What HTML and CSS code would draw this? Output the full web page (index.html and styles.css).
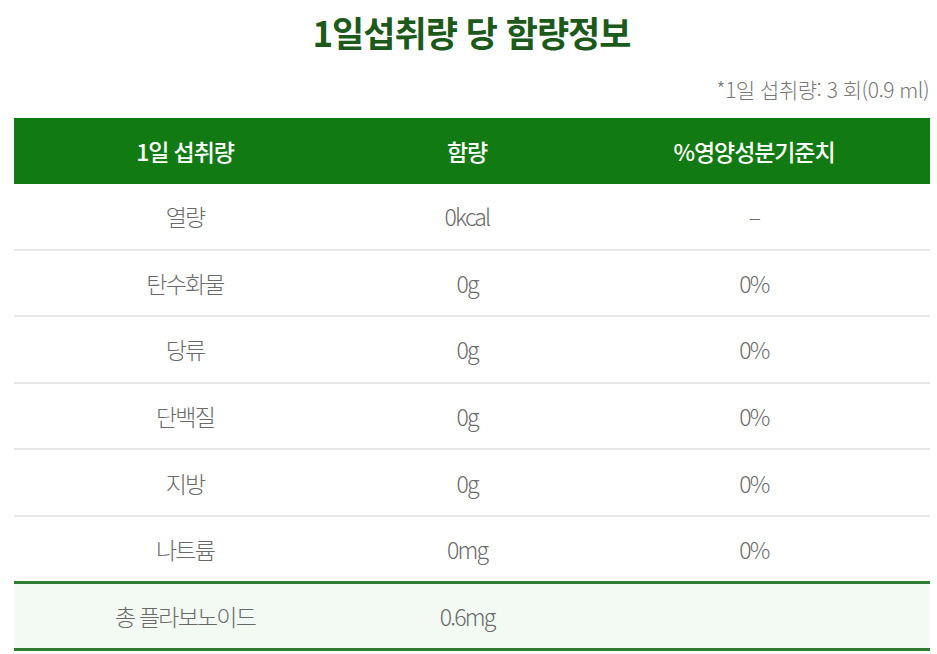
FILE: index.html
```html
<!DOCTYPE html>
<html lang="ko">
<head>
<meta charset="utf-8">
<link rel="stylesheet" href="styles.css">
</head>
<body>
<div class="wrap">
  <h1 class="title">1일섭취량 당 함량정보</h1>
  <p class="note">*1일 섭취량: 3 회(0.9 ml)</p>
  <table class="nutri">
    <thead>
      <tr><th class="c1">1일 섭취량</th><th class="c2">함량</th><th class="c3">%영양성분기준치</th></tr>
    </thead>
    <tbody>
      <tr><td>열량</td><td>0kcal</td><td>–</td></tr>
      <tr><td>탄수화물</td><td>0g</td><td>0%</td></tr>
      <tr><td>당류</td><td>0g</td><td>0%</td></tr>
      <tr><td>단백질</td><td>0g</td><td>0%</td></tr>
      <tr><td>지방</td><td>0g</td><td>0%</td></tr>
      <tr><td>나트륨</td><td>0mg</td><td>0%</td></tr>
    </tbody>
    <tfoot>
      <tr><td>총 플라보노이드</td><td>0.6mg</td><td></td></tr>
    </tfoot>
  </table>
</div>
</body>
</html>
```
FILE: styles.css
```css
html, body { margin: 0; padding: 0; background: #fff; }
body { font-family: "Noto Sans CJK KR", "Noto Sans", sans-serif; }
.wrap { padding: 0 8px 0 14px; }
.title {
  margin: 0;
  padding-top: 9px;
  height: 56px;
  text-align: center;
  font-size: 35px;
  font-weight: 700;
  letter-spacing: -1px;
  color: #1c5a1c;
  line-height: 46px;
}
.note {
  margin: 10px 0 0 0;
  text-align: right;
  font-size: 21px;
  font-weight: 300;
  letter-spacing: -0.5px;
  color: #777;
  line-height: 28px;
  height: 43px;
}
.nutri {
  width: 916px;
  border-collapse: collapse;
  table-layout: fixed;
}
.nutri th {
  background: #127a12;
  color: #fff;
  font-size: 23px;
  font-weight: 500;
  height: 66px;
  padding: 0;
  letter-spacing: -1.1px;
}
.nutri .c1 { width: 342px; }
.nutri .c2 { width: 222px; }
.nutri td {
  text-align: center;
  color: #6a6a6a;
  font-size: 23px;
  font-weight: 300;
  height: 64.6px;
  padding: 0;
  border-bottom: 2px solid #e8e8e8;
  letter-spacing: -1.8px;
}
.nutri tbody tr:last-child td { border-bottom: none; height: 64px; }
.nutri tfoot td {
  background: #f3faf3;
  border-top: 3px solid #2e7d32;
  border-bottom: 3px solid #2e7d32;
  height: 64px;
}
```
